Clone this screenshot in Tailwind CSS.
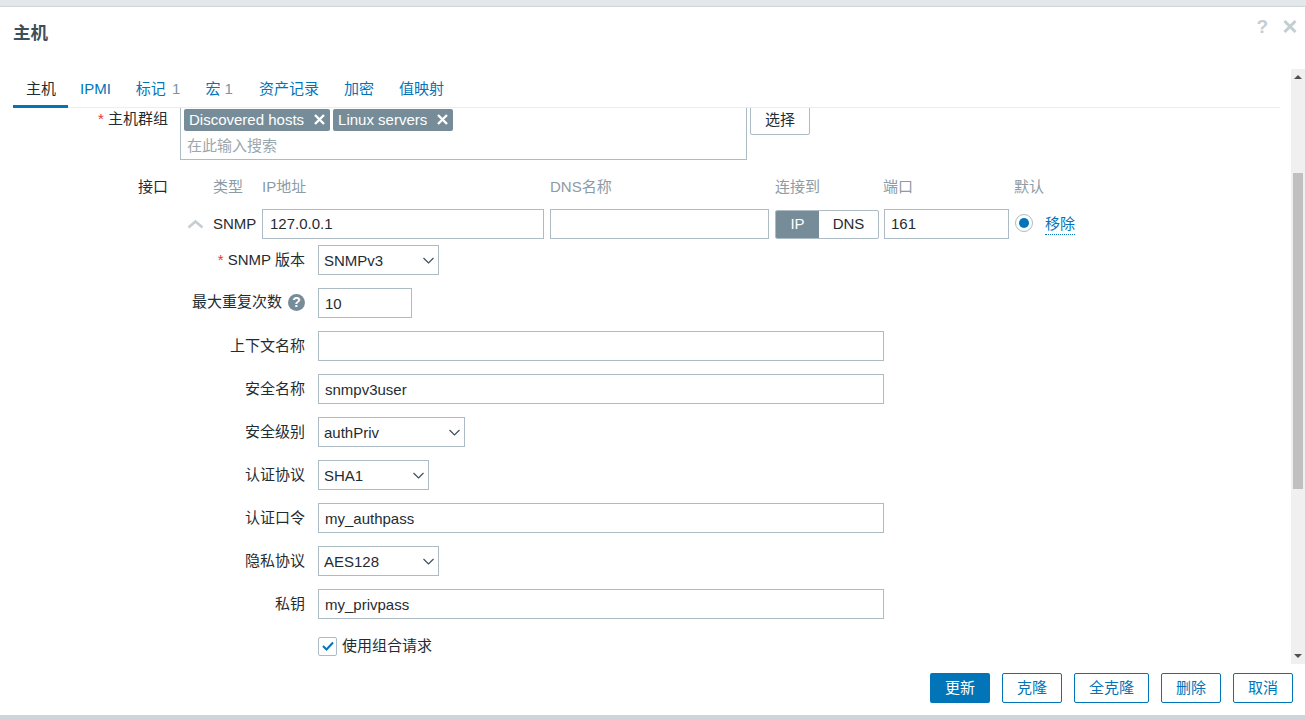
<!DOCTYPE html>
<html lang="en">
<head>
  <meta charset="UTF-8" />
  <title>主机</title>
  <script src="https://cdn.jsdelivr.net/npm/@tailwindcss/browser@4"></script>
</head>
<body class="bg-[#ced6da] h-screen overflow-hidden font-['Liberation_Sans','Noto_Sans_CJK_SC',sans-serif] text-[15px] text-[#1f2c33]">

  <!-- top strip -->
  <div class="h-[7px] bg-[#e3e7ea] border-b border-[#ced6da]"></div>

  <!-- DIALOG -->
  <div class="bg-white h-[708px] mr-px flex flex-col">

    <!-- HEADER -->
    <div class="h-[62px] shrink-0 flex justify-between pl-[13px] pr-[8px]">
      <h4 class="text-[17.5px] font-bold text-[#3d4f58] pt-[15px] leading-[22px]">主机</h4>
      <div class="flex gap-[15px] pt-[8px] h-[30px] items-center text-[#c3ced3]">
        <span class="text-[19px] font-bold leading-none">?</span>
        <svg width="14" height="13" viewBox="0 0 14 13"><path d="M1.5 1 L12.5 12 M12.5 1 L1.5 12" stroke="#c3ced3" stroke-width="3"/></svg>
      </div>
    </div>

    <div class="flex h-[595px]">
      <div class="flex-1 min-w-0 flex flex-col">

        <!-- TABS -->
        <div class="h-[39px] shrink-0 ml-[13px] mr-[11px] border-b border-[#ebeef0] flex text-[#0275b8]">
          <div class="h-[39px] pl-[13px] pr-[12px] pt-[9px] border-b-[3px] border-[#0275b8] text-[#1f2c33]">主机</div>
          <div class="pl-[12px] pr-[13px] pt-[9px]">IPMI</div>
          <div class="pl-[12px] pr-[12px] pt-[9px]">标记 <span class="text-[#7d95a3] ml-[2px]">1</span></div>
          <div class="pl-[13px] pr-[13px] pt-[9px]">宏 <span class="text-[#7d95a3]">1</span></div>
          <div class="pl-[13px] pr-[12px] pt-[9px]">资产记录</div>
          <div class="pl-[13px] pr-[12px] pt-[9px]">加密</div>
          <div class="pl-[13px] pr-[13px] pt-[9px]">值映射</div>
        </div>

        <!-- FORM -->
        <div class="flex-1 overflow-hidden">

          <!-- host groups -->
          <div class="flex -mt-[4px] h-[56px]">
            <div class="w-[168px] text-right pt-[4px] leading-[22px]"><span class="text-[#e33734]">*</span> 主机群组</div>
            <div class="ml-[12px] w-[567px] h-[56px] border border-[#acbbc4]">
              <div class="flex gap-[3px] pt-[4px] pl-[3px]">
                <span class="h-[22px] rounded-[2px] bg-[#768d99] text-white pl-[5px] pr-[5px] pb-[1px] flex items-center gap-[10px] leading-none">Discovered hosts
                  <svg width="11" height="11" viewBox="0 0 11 11"><path d="M1 1 L10 10 M10 1 L1 10" stroke="#fff" stroke-width="2.4"/></svg>
                </span>
                <span class="h-[22px] rounded-[2px] bg-[#768d99] text-white pl-[5px] pr-[5px] pb-[1px] flex items-center gap-[10px] leading-none">Linux servers
                  <svg width="11" height="11" viewBox="0 0 11 11"><path d="M1 1 L10 10 M10 1 L1 10" stroke="#fff" stroke-width="2.4"/></svg>
                </span>
              </div>
              <div class="pl-[6px] pt-[4px] text-[#9aa7ae] leading-[22px]">在此输入搜索</div>
            </div>
            <div class="ml-[3px] w-[60px] h-[31px] pt-[2px] border border-[#acbbc4] rounded-[2px] flex items-center justify-center">选择</div>
          </div>

          <!-- interfaces header -->
          <div class="flex mt-[16px] h-[22px] leading-[22px]">
            <div class="w-[168px] text-right">接口</div>
            <div class="flex text-[#8c9ba4]">
              <div class="w-[44px] ml-[45px]">类型</div>
              <div class="w-[288px] ml-[5px]">IP地址</div>
              <div class="w-[225px]">DNS名称</div>
              <div class="w-[108px]">连接到</div>
              <div class="w-[131px]">端口</div>
              <div>默认</div>
            </div>
          </div>

          <!-- interface row -->
          <div class="flex items-center mt-[11px] h-[30px]">
            <svg class="ml-[187px]" width="17" height="10" viewBox="0 0 17 10"><path d="M1.5 8.5 L8.5 2.5 L15.5 8.5" fill="none" stroke="#c5ced3" stroke-width="2.6"/></svg>
            <span class="ml-[9px] w-[49px]">SNMP</span>
            <div class="w-[282px] h-[30px] border border-[#acbbc4] px-[7px] flex items-center">127.0.0.1</div>
            <div class="ml-[6px] w-[219px] h-[30px] border border-[#acbbc4]"></div>
            <div class="ml-[6px] w-[104px] h-[29px] border border-[#acbbc4] rounded-[2px] flex overflow-hidden">
              <div class="w-[43px] bg-[#768d99] text-white flex items-center justify-center">IP</div>
              <div class="flex-1 flex items-center justify-center">DNS</div>
            </div>
            <div class="ml-[5px] w-[125px] h-[30px] border border-[#acbbc4] px-[6px] flex items-center">161</div>
            <div class="ml-[6px] w-[18px] h-[18px] rounded-full border border-[#acbbc4] flex items-center justify-center -mt-[3px]"><div class="w-[10px] h-[10px] rounded-full bg-[#0275b8]"></div></div>
            <span class="ml-[12px] text-[#0275b8] border-b border-dotted border-[#0275b8] leading-[20px]">移除</span>
          </div>

          <!-- snmp fields -->
          <div class="grid grid-cols-[305px_1fr] gap-x-[13px] gap-y-[13px] items-center mt-[6px] leading-[22px]">
            <div class="text-right"><span class="text-[#e33734]">*</span> SNMP 版本</div>
            <div class="w-[121px] h-[30px] border border-[#acbbc4] pl-[5px] pr-[4px] pt-[2px] flex items-center justify-between">SNMPv3
              <svg class="-mt-[2px]" width="11" height="7" viewBox="0 0 11 7"><path d="M0.5 1 L5.5 6 L10.5 1" fill="none" stroke="#3d4f58" stroke-width="1.2"/></svg>
            </div>

            <div class="text-right flex justify-end items-center gap-[6px] pb-[2px]">最大重复次数
              <span class="w-[17px] h-[17px] rounded-full bg-[#768d99] text-white text-[14px] font-bold flex items-center justify-center leading-none">?</span>
            </div>
            <div class="w-[94px] h-[30px] border border-[#acbbc4] px-[6px] pt-[2px] flex items-center">10</div>

            <div class="text-right">上下文名称</div>
            <div class="w-[566px] h-[30px] border border-[#acbbc4] px-[6px] flex items-center"></div>

            <div class="text-right">安全名称</div>
            <div class="w-[566px] h-[30px] border border-[#acbbc4] px-[6px] pt-[2px] flex items-center">snmpv3user</div>

            <div class="text-right">安全级别</div>
            <div class="w-[147px] h-[30px] border border-[#acbbc4] pl-[5px] pr-[4px] pt-[2px] flex items-center justify-between">authPriv
              <svg class="-mt-[2px]" width="11" height="7" viewBox="0 0 11 7"><path d="M0.5 1 L5.5 6 L10.5 1" fill="none" stroke="#3d4f58" stroke-width="1.2"/></svg>
            </div>

            <div class="text-right">认证协议</div>
            <div class="w-[111px] h-[30px] border border-[#acbbc4] pl-[5px] pr-[4px] pt-[2px] flex items-center justify-between">SHA1
              <svg class="-mt-[2px]" width="11" height="7" viewBox="0 0 11 7"><path d="M0.5 1 L5.5 6 L10.5 1" fill="none" stroke="#3d4f58" stroke-width="1.2"/></svg>
            </div>

            <div class="text-right">认证口令</div>
            <div class="w-[566px] h-[30px] border border-[#acbbc4] px-[6px] pt-[2px] flex items-center">my_authpass</div>

            <div class="text-right">隐私协议</div>
            <div class="w-[121px] h-[30px] border border-[#acbbc4] pl-[5px] pr-[4px] pt-[2px] flex items-center justify-between">AES128
              <svg class="-mt-[2px]" width="11" height="7" viewBox="0 0 11 7"><path d="M0.5 1 L5.5 6 L10.5 1" fill="none" stroke="#3d4f58" stroke-width="1.2"/></svg>
            </div>

            <div class="text-right">私钥</div>
            <div class="w-[566px] h-[30px] border border-[#acbbc4] px-[6px] pt-[2px] flex items-center">my_privpass</div>

            <div></div>
            <div class="flex items-center gap-[5px] h-[28px]">
              <span class="w-[19px] h-[19px] border border-[#acbbc4] rounded-[2px] flex items-center justify-center">
                <svg width="12" height="10" viewBox="0 0 12 10"><path d="M1 5 L4.5 8.5 L11 1.5" fill="none" stroke="#0275b8" stroke-width="2"/></svg>
              </span>使用组合请求
            </div>
          </div>
        </div>
      </div>

      <!-- SCROLLBAR -->
      <div class="w-[14px] bg-[#f0f0f0] flex flex-col items-center justify-between py-[6px] relative">
        <div class="w-0 h-0 border-x-[4px] border-x-transparent border-b-[4px] border-b-[#505050]"></div>
        <div class="absolute top-[104px] left-[2px] w-[10px] h-[316px] bg-[#c0c0c0]"></div>
        <div class="w-0 h-0 border-x-[4px] border-x-transparent border-t-[4px] border-t-[#505050]"></div>
      </div>
    </div>

    <!-- FOOTER -->
    <div class="flex justify-end gap-[12px] pt-[9px] pr-[12px]">
      <div class="w-[60px] h-[30px] rounded-[2px] bg-[#0275b8] text-white flex items-center justify-center">更新</div>
      <div class="w-[60px] h-[30px] rounded-[2px] border border-[#0275b8] text-[#0275b8] flex items-center justify-center">克隆</div>
      <div class="w-[75px] h-[30px] rounded-[2px] border border-[#0275b8] text-[#0275b8] flex items-center justify-center">全克隆</div>
      <div class="w-[60px] h-[30px] rounded-[2px] border border-[#0275b8] text-[#0275b8] flex items-center justify-center">删除</div>
      <div class="w-[60px] h-[30px] rounded-[2px] border border-[#0275b8] text-[#0275b8] flex items-center justify-center">取消</div>
    </div>
  </div>

</body>
</html>
